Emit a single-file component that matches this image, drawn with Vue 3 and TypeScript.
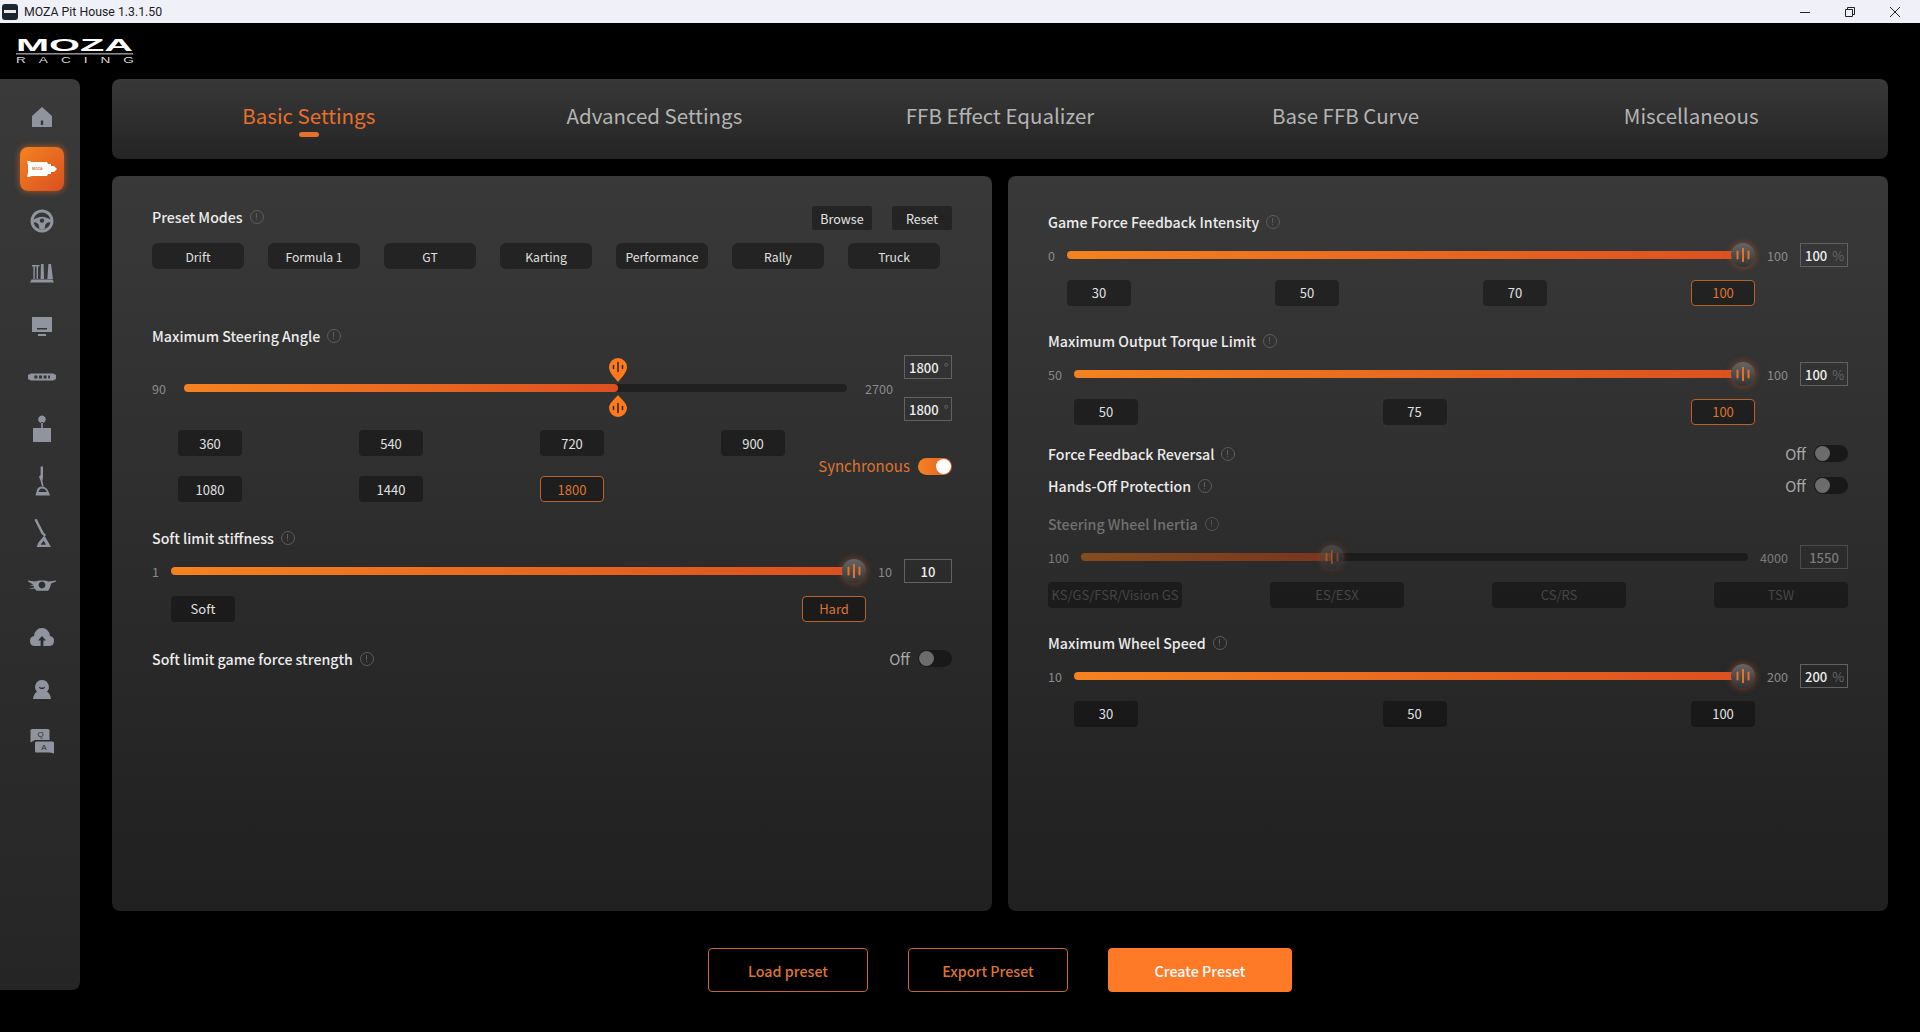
<script setup lang="ts">
interface NavItem {
  d: string
  active?: boolean
  texts?: { x: number; y: number; size: number; value: string }[]
}

interface Field {
  kind: 'slider' | 'toggle'
  label: string
  min?: number
  max?: number
  value?: number
  unit?: string
  presets?: string[]
  activePreset?: string
  disabled?: boolean
}

const navItems: NavItem[] = [
  { d: 'M18 8 L28 17 V28 H8 V17 Z M16.8 21.5 V26 H19.2 V21.5 Z' },
  {
    active: true,
    d: 'M3 10 H6 L7 11 H23 L24 13 H27 V15 H30 L33 18 L30 21 H27 V23 H24 L23 25 H7 L6 26 H3 L4 22 V14 Z',
    texts: [{ x: 8, y: 19.2, size: 3.6, value: 'MOZA' }],
  },
  {
    d: 'M18 6.5 A11.5 11.5 0 1 1 17.99 6.5 Z M18 9.5 A8.5 8.5 0 1 0 18.01 9.5 Z M9.6 16.5 C12 15.5 15 13.8 18 13.8 C21 13.8 24 15.5 26.4 16.5 L26.4 19 C24 19 22.4 20 21.4 21.8 L20.4 26.6 H15.6 L14.6 21.8 C13.6 20 12 19 9.6 19 Z M18 15.4 A2.2 2.2 0 1 0 18.01 15.4 Z',
  },
  {
    d: 'M8 10 H15.5 V11.6 H14 V24 H12.6 V11.6 H10.8 V24 H9.4 V11.6 H8 Z M17 9 H19.6 L20 24 H16.6 Z M24.4 9 H27 L29 24 H23.4 Z M7.5 24.6 H28.5 L30 27.5 H6 Z',
  },
  {
    d: 'M8 10 H28 V25 H8 Z M13 21 V22.6 H23 V21 Z M14 27 H22 V29 H14 Z',
  },
  {
    d: 'M7 14.4 H29 L32 16 V20 L29 21.6 H7 L4 20 V16 Z M10.4 16.4 V19.6 H13.4 V16.4 Z M15 16.4 V19.6 H18 V16.4 Z M19.6 16.4 V19.6 H22.6 V16.4 Z M24.2 16.4 V19.6 H26 V16.4 Z',
  },
  {
    d: 'M18 4.5 A3.8 3.8 0 1 1 17.99 4.5 Z M17.2 11 H18.8 V17 H27 V31 H9 V17 H17.2 Z',
  },
  {
    d: 'M16.6 3.5 H19 V14 L18.4 18 L19.6 23 H18 L16.6 18 L15 13.5 L16.6 12 Z M11.5 32.5 L13 27 C13.6 24.6 15.6 23.4 18 23.4 C21.6 23.4 24 26 26 32.5 Z M14.5 29 H23 C22 26.6 20.4 25.4 18 25.4 C16 25.4 15 27 14.5 29 Z',
  },
  {
    d: 'M10.4 4.8 L12.6 3.8 L19.6 17.4 L22 20 L20.6 21.4 L17.6 19 Z M12.6 32 L14.4 27.4 L19.4 21.6 L21 21.6 L27 32 Z M16.6 29.8 H22 L19.6 25.6 Z',
  },
  {
    d: 'M4 13.4 L11 14.6 C14 13 22 13 25 14.6 L32 13.4 V14.6 L27 16.4 C26.6 19 25.8 21.6 24 23.8 H12.4 L11 21.8 H4.4 L10 20.4 L9.6 18.8 H5.4 L9.2 17.4 L4 14.6 Z M18 14.6 A3.4 3.4 0 1 0 18.01 14.6 Z',
  },
  {
    d: 'M11 27 A5 5 0 0 1 10 17.1 A8 8 0 0 1 26 17.1 A5 5 0 0 1 25 27 H19.4 V21.6 H22 L18 17 L14 21.6 H16.6 V27 Z',
  },
  {
    d: 'M18 9 A7 7 0 0 1 23 20.8 C25 21.8 26.5 24.3 27 28 H9 C9.5 24.3 11 21.8 13 20.8 A7 7 0 0 1 18 9 Z M15 15.4 C16 17 20 17 21 15.4 V16.6 C20 18.6 16 18.6 15 16.6 Z',
  },
  {
    d: 'M8 6 H24 A1.5 1.5 0 0 1 25.5 7.5 V17 H11 L6.5 19.5 V7.5 A1.5 1.5 0 0 1 8 6 Z M12.5 18.5 H28.5 A1.5 1.5 0 0 1 30 20 V30.5 L26 29.5 H12.5 A1.5 1.5 0 0 1 11 28 V20 A1.5 1.5 0 0 1 12.5 18.5 Z',
    texts: [
      { x: 13.4, y: 14.4, size: 8, value: 'Q' },
      { x: 17.2, y: 27, size: 8, value: 'A' },
    ],
  },
]

const tabs = ['Basic Settings', 'Advanced Settings', 'FFB Effect Equalizer', 'Base FFB Curve', 'Miscellaneous']
const presetModes = ['Drift', 'Formula 1', 'GT', 'Karting', 'Performance', 'Rally', 'Truck']
const angleRows = ['360', '540', '720', '900', '1080', '1440', '1800']

const rightFields: Field[] = [
  {
    kind: 'slider',
    label: 'Game Force Feedback Intensity',
    min: 0,
    max: 100,
    value: 100,
    unit: '%',
    presets: ['30', '50', '70', '100'],
    activePreset: '100',
  },
  {
    kind: 'slider',
    label: 'Maximum Output Torque Limit',
    min: 50,
    max: 100,
    value: 100,
    unit: '%',
    presets: ['50', '75', '100'],
    activePreset: '100',
  },
  { kind: 'toggle', label: 'Force Feedback Reversal' },
  { kind: 'toggle', label: 'Hands-Off Protection' },
  {
    kind: 'slider',
    label: 'Steering Wheel Inertia',
    min: 100,
    max: 4000,
    value: 1550,
    presets: ['KS/GS/FSR/Vision GS', 'ES/ESX', 'CS/RS', 'TSW'],
    disabled: true,
  },
  {
    kind: 'slider',
    label: 'Maximum Wheel Speed',
    min: 10,
    max: 200,
    value: 200,
    unit: '%',
    presets: ['30', '50', '100'],
  },
]

const ratio = (value = 0, min = 0, max = 100): number => (value - min) / (max - min)
</script>

<template>
  <div class="app">
    <div class="titlebar">
      <div class="title-left">
        <span class="app-icon"><i></i></span>
        <span>MOZA Pit House 1.3.1.50</span>
      </div>
      <div class="window-controls">
        <svg width="10" height="10" viewBox="0 0 10 10"><path d="M0 5.5H10" stroke="#222" fill="none" /></svg>
        <svg width="10" height="10" viewBox="0 0 10 10">
          <path d="M.5 2.5H7.5V9.5H.5Z M2.5 2.5V.5H9.5V7.5H7.5" stroke="#222" fill="none" />
        </svg>
        <svg width="10" height="10" viewBox="0 0 10 10"><path d="M0 0L10 10M10 0L0 10" stroke="#222" fill="none" /></svg>
      </div>
    </div>

    <header class="brand">
      <svg width="118" height="32" viewBox="0 0 118 32">
        <text x="0" y="17" textLength="117" lengthAdjust="spacingAndGlyphs" class="logo-main">MOZA</text>
        <rect x="0" y="19" width="117" height="1.6" fill="#8a8a8a" />
        <text transform="scale(1.6 1)" x="0" y="29" textLength="73.7" class="logo-sub">RACING</text>
      </svg>
    </header>

    <div class="main">
      <nav class="sidebar">
        <div v-for="(item, i) in navItems" :key="i" class="nav-item" :class="{ active: item.active }">
          <svg width="36" height="36" viewBox="0 0 36 36">
            <path :d="item.d" fill-rule="evenodd" class="nav-shape" />
            <text v-for="t in item.texts" :key="t.value" :x="t.x" :y="t.y" :font-size="t.size" class="nav-text">{{ t.value }}</text>
          </svg>
        </div>
      </nav>

      <div class="content">
        <div class="tabs">
          <div v-for="(tab, i) in tabs" :key="tab" class="tab" :class="{ active: i === 0 }">
            <span>{{ tab }}</span>
          </div>
        </div>

        <div class="panels">
          <section class="panel panel-left">
            <div class="preset-head">
              <div class="field-label">Preset Modes<i class="info"></i></div>
              <div class="preset-actions">
                <button class="small-btn">Browse</button>
                <button class="small-btn">Reset</button>
              </div>
            </div>
            <div class="preset-row">
              <button v-for="mode in presetModes" :key="mode" class="chip mode">{{ mode }}</button>
            </div>

            <div class="field-label steer-label">Maximum Steering Angle<i class="info"></i></div>
            <div class="steer-row">
              <span class="limit">90</span>
              <div class="track" :style="{ '--p': ratio(1800, 90, 2700) }">
                <div class="fill fill-plain"></div>
                <svg class="pin pin-top" width="18" height="24" viewBox="0 0 18 24">
                  <path d="M9 24C6 20 0 15 0 9A9 9 0 0 1 18 9C18 15 12 20 9 24Z" fill="#ff7a1c" />
                  <path d="M4.5 7.5V10.5M9 4.5V13.5M13.5 7.5V10.5" stroke="#3a2a20" stroke-width="1.6" stroke-linecap="round" />
                </svg>
                <svg class="pin pin-bottom" width="18" height="22" viewBox="0 0 18 22">
                  <path d="M9 0C12 4 18 8 18 13A9 9 0 0 1 0 13C0 8 6 4 9 0Z" fill="#ff7a1c" />
                  <path d="M4.5 11.5V14.5M9 8.5V17.5M13.5 11.5V14.5" stroke="#3a2a20" stroke-width="1.6" stroke-linecap="round" />
                </svg>
              </div>
              <span class="limit">2700</span>
              <div class="steer-values">
                <div class="value"><b>1800</b><small>°</small></div>
                <div class="value"><b>1800</b><small>°</small></div>
              </div>
            </div>
            <div class="angle-block">
              <div class="angle-grid">
                <button v-for="a in angleRows" :key="a" class="chip" :class="{ selected: a === '1800' }">{{ a }}</button>
              </div>
              <div class="sync">
                <span>Synchronous</span>
                <span class="switch on"></span>
              </div>
            </div>

            <div class="field soft-field">
              <div class="field-label">Soft limit stiffness<i class="info"></i></div>
              <span class="limit">1</span>
              <div class="track" :style="{ '--p': 1 }">
                <div class="fill"></div>
                <div class="knob">
                  <svg width="16" height="14" viewBox="0 0 16 14">
                    <path d="M2.5 3.5V10.5M8 .5V13.5M13.5 3.5V10.5" stroke="#e8702a" stroke-width="2" stroke-linecap="round" />
                  </svg>
                </div>
              </div>
              <span class="limit">10</span>
              <div class="value center"><b>10</b></div>
              <div class="chips">
                <button class="chip">Soft</button>
                <button class="chip selected">Hard</button>
              </div>
            </div>

            <div class="toggle-row soft-force">
              <div class="field-label">Soft limit game force strength<i class="info"></i></div>
              <div class="off-group">
                <span>Off</span>
                <span class="switch"></span>
              </div>
            </div>
          </section>

          <section class="panel panel-right">
            <template v-for="field in rightFields" :key="field.label">
              <div v-if="field.kind === 'slider'" class="field slider-field" :class="{ disabled: field.disabled }">
                <div class="field-label">{{ field.label }}<i class="info"></i></div>
                <span class="limit">{{ field.min }}</span>
                <div class="track" :style="{ '--p': ratio(field.value, field.min, field.max) }">
                  <div class="fill"></div>
                  <div class="knob">
                    <svg width="16" height="14" viewBox="0 0 16 14">
                      <path d="M2.5 3.5V10.5M8 .5V13.5M13.5 3.5V10.5" stroke="#e8702a" stroke-width="2" stroke-linecap="round" />
                    </svg>
                  </div>
                </div>
                <span class="limit">{{ field.max }}</span>
                <div class="value" :class="{ center: !field.unit }">
                  <b>{{ field.value }}</b><small v-if="field.unit">{{ field.unit }}</small>
                </div>
                <div class="chips">
                  <button
                    v-for="p in field.presets"
                    :key="p"
                    class="chip"
                    :class="{ selected: p === field.activePreset, wide: field.disabled }"
                  >
                    {{ p }}
                  </button>
                </div>
              </div>
              <div v-else class="toggle-row toggle-field">
                <div class="field-label">{{ field.label }}<i class="info"></i></div>
                <div class="off-group">
                  <span>Off</span>
                  <span class="switch"></span>
                </div>
              </div>
            </template>
          </section>
        </div>

        <div class="actions">
          <button class="action">Load preset</button>
          <button class="action">Export Preset</button>
          <button class="action primary">Create Preset</button>
        </div>
      </div>
    </div>
  </div>
</template>

<style>
html,
body {
  margin: 0;
  background: #000;
}
</style>

<style scoped>
.app {
  width: 1920px;
  height: 1032px;
  overflow: hidden;
  background: #000;
  font-family: "Noto Sans CJK SC", "Noto Sans", sans-serif;
  color: #e8e8e8;
}

button {
  font-family: inherit;
  cursor: pointer;
  padding: 0;
}

/* title bar */
.titlebar {
  height: 23px;
  background: #f0f0f8;
  display: flex;
  align-items: center;
  justify-content: space-between;
  padding: 0 20px 0 2px;
  color: #1c1c1c;
  font-family: Roboto, sans-serif;
  font-size: 12.3px;
}

.title-left {
  display: flex;
  align-items: center;
  gap: 6px;
}

.app-icon {
  width: 16px;
  height: 16px;
  border-radius: 3px;
  background: #1a2531;
  display: flex;
  align-items: center;
  justify-content: center;
}

.app-icon i {
  width: 12px;
  height: 3px;
  background: #e8e8e8;
}

.window-controls {
  display: flex;
  gap: 35px;
}

/* logo */
.brand {
  height: 56px;
  padding: 11px 0 0 16px;
  box-sizing: border-box;
}

.logo-main {
  font-family: "Liberation Sans", sans-serif;
  font-weight: 700;
  font-size: 17px;
  fill: #fff;
}

.logo-sub {
  font-family: "Liberation Sans", sans-serif;
  font-size: 8.5px;
  fill: #d8d8d8;
}

.main {
  display: flex;
  align-items: flex-start;
}

/* sidebar */
.sidebar {
  width: 80px;
  height: 911px;
  box-sizing: border-box;
  padding: 16px 0 0 4px;
  border-radius: 0 8px 8px 0;
  background: linear-gradient(180deg, #3a3a3a 0%, #252525 100%);
  display: flex;
  flex-direction: column;
  align-items: center;
  gap: 8px;
}

.nav-item {
  width: 44px;
  height: 44px;
  border-radius: 8px;
  display: flex;
  align-items: center;
  justify-content: center;
}

.nav-item.active {
  background: linear-gradient(135deg, #f58220, #d9501f);
  box-shadow: 0 0 7px rgba(240, 110, 30, 0.65);
}

.nav-shape {
  fill: #8f949e;
}

.nav-item.active .nav-shape {
  fill: #fff;
}

.nav-text {
  font-family: "Liberation Sans", sans-serif;
  fill: #2e2e2e;
}

.nav-item.active .nav-text {
  font-weight: 700;
  fill: #e8702a;
}

/* tabs */
.content {
  width: 1776px;
  margin-left: 32px;
}

.tabs {
  height: 80px;
  box-sizing: border-box;
  padding: 0 24px;
  border-radius: 8px;
  background: linear-gradient(180deg, #383838, #242424);
  display: grid;
  grid-template-columns: repeat(5, 1fr);
}

.tab {
  display: flex;
  justify-content: center;
  padding-top: 20px;
  font-size: 20.5px;
  line-height: 32px;
  color: #b4b4b4;
}

.tab span {
  position: relative;
  height: 32px;
}

.tab.active {
  color: #e8702a;
}

.tab.active span::after {
  content: "";
  position: absolute;
  left: 50%;
  bottom: -6px;
  width: 20px;
  height: 5px;
  margin-left: -10px;
  border-radius: 3px;
  background: #e8702a;
}

/* panels */
.panels {
  margin-top: 17px;
  display: flex;
  gap: 16px;
}

.panel {
  flex: 1;
  height: 735px;
  box-sizing: border-box;
  padding: 30px 40px 0;
  border-radius: 8px;
  background: linear-gradient(180deg, #393939 0%, #202020 100%);
}

.panel-right {
  padding-top: 37px;
}

.field-label {
  display: flex;
  align-items: center;
  box-sizing: border-box;
  height: 20px;
  padding-bottom: 2px;
  font-size: 14.2px;
  line-height: 18px;
  font-weight: 500;
  color: #ececec;
  white-space: nowrap;
}

.info {
  position: relative;
  width: 12px;
  height: 12px;
  margin-left: 7px;
  border: 1px solid #5c5c5c;
  border-radius: 50%;
}

.info::after {
  content: "";
  position: absolute;
  left: 5px;
  top: 2px;
  width: 1px;
  height: 5px;
  background: #5c5c5c;
}

.info::before {
  content: "";
  position: absolute;
  left: 5px;
  top: 8px;
  width: 1px;
  height: 1px;
  background: #5c5c5c;
}

.preset-head {
  display: flex;
  align-items: center;
  justify-content: space-between;
  height: 24px;
}

.preset-actions {
  display: flex;
  gap: 20px;
}

.small-btn {
  width: 60px;
  height: 24px;
  border: none;
  border-radius: 2px;
  background: rgba(0, 0, 0, 0.35);
  color: #e4e4e4;
  font-size: 12.5px;
}

.preset-row {
  margin-top: 13px;
  display: flex;
  gap: 24px;
}

.chip {
  width: 64px;
  height: 26px;
  box-sizing: border-box;
  border: 1px solid transparent;
  border-radius: 4px;
  background: rgba(0, 0, 0, 0.35);
  color: #e0e0e0;
  font-size: 13px;
  line-height: 22px;
  white-space: nowrap;
}

.chip.mode {
  width: 92px;
  border-radius: 6px;
  font-size: 12.2px;
}

.chip.mode,
.angle-grid .chip {
  padding-top: 2px;
}

.chip.wide {
  width: 134px;
}

.chip.selected {
  border-color: #b8622b;
  color: #de7430;
}

.steer-label {
  margin-top: 58px;
}

.steer-row {
  margin-top: 8px;
  display: flex;
  align-items: center;
  gap: 18px;
}

.steer-values {
  margin-left: -7px;
  display: flex;
  flex-direction: column;
  gap: 18px;
}

.limit {
  padding-top: 2px;
  font-size: 12.6px;
  line-height: 18px;
  color: #8a8a8a;
}

.track {
  position: relative;
  flex: 1;
  height: 8px;
  border-radius: 4px;
  background: rgba(0, 0, 0, 0.35);
}

.fill {
  height: 100%;
  width: calc(12px + (100% - 24px) * var(--p));
  border-radius: 4px 0 0 4px;
  background: linear-gradient(90deg, #f58220, #dc5020);
}

.fill-plain {
  width: calc(100% * var(--p));
  border-radius: 4px;
}

.pin {
  position: absolute;
  left: calc(100% * var(--p) - 9px);
}

.pin-top {
  top: -26px;
}

.pin-bottom {
  top: 11px;
}

.knob {
  position: absolute;
  top: -8px;
  left: calc((100% - 24px) * var(--p));
  width: 24px;
  height: 24px;
  border-radius: 50%;
  background: linear-gradient(180deg, #666, #333);
  box-shadow: 0 0 7px rgba(225, 90, 30, 0.55);
  display: flex;
  align-items: center;
  justify-content: center;
}

.value {
  width: 48px;
  height: 24px;
  box-sizing: border-box;
  padding-left: 4px;
  border: 1px solid #626262;
  display: flex;
  align-items: center;
  gap: 5px;
  font-size: 13px;
  color: #eee;
}

.value b {
  font-weight: 500;
}

.value small {
  font-size: 13px;
  color: #666;
}

.value.center {
  justify-content: center;
  padding-left: 0;
}

.angle-block {
  margin-top: 9px;
  display: flex;
  align-items: center;
  justify-content: space-between;
  padding-left: 26px;
}

.angle-grid {
  display: grid;
  grid-template-columns: repeat(4, 64px);
  column-gap: 117px;
  row-gap: 20px;
}

.sync {
  display: flex;
  align-items: center;
  gap: 8px;
  font-size: 15px;
  line-height: 20px;
  color: #de7430;
}

.switch {
  position: relative;
  display: block;
  width: 34px;
  height: 17px;
  border-radius: 9px;
  background: #191919;
}

.switch::after {
  content: "";
  position: absolute;
  left: 1px;
  top: 1px;
  width: 15px;
  height: 15px;
  border-radius: 50%;
  background: #6c6c6c;
}

.switch.on {
  background: linear-gradient(90deg, #f58220, #e0602a);
}

.switch.on::after {
  left: auto;
  right: 1px;
  background: #fff;
}

/* label, then slider row, then preset chips */
.field {
  display: grid;
  grid-template-columns: auto 1fr auto auto;
  column-gap: 12px;
  align-items: center;
}

.field .field-label {
  grid-column: 1 / -1;
  margin-bottom: 10px;
}

.field .limit,
.field .track,
.field .value {
  grid-row: 2;
}

.field .track {
  flex: none;
}

.chips {
  grid-column: 2;
  grid-row: 3;
  margin-top: 13px;
  display: flex;
  justify-content: space-between;
}

.disabled .chips {
  grid-column: 1 / -1;
}

.soft-field {
  margin-top: 27px;
}

.slider-field + .slider-field {
  margin-top: 26px;
}

.slider-field + .toggle-field {
  margin-top: 20px;
}

.toggle-field + .toggle-field {
  margin-top: 12px;
}

.toggle-field + .slider-field {
  margin-top: 18px;
}

.toggle-row {
  display: flex;
  align-items: flex-start;
  justify-content: space-between;
}

.soft-force {
  margin-top: 28px;
}

.off-group {
  display: flex;
  align-items: flex-start;
  gap: 8px;
  font-size: 15px;
  line-height: 18px;
  color: #a8a8a8;
}

.disabled .field-label {
  color: #707070;
}

.disabled .info {
  opacity: 0.8;
}

.disabled .track .fill,
.disabled .knob {
  opacity: 0.48;
}

.disabled .limit,
.disabled .value b {
  color: #7a7a7a;
}

.disabled .value {
  border-color: #4c4c4c;
}

.disabled .chip {
  color: #464646;
  font-size: 13px;
}

/* bottom buttons */
.actions {
  margin-top: 37px;
  display: flex;
  justify-content: center;
  gap: 40px;
}

.action {
  width: 160px;
  height: 44px;
  box-sizing: border-box;
  border: 1px solid #c4682c;
  border-radius: 4px;
  background: transparent;
  color: #de7430;
  font-size: 14.3px;
  font-weight: 500;
}

.action.primary {
  width: 184px;
  border-color: #ff7a26;
  background: #ff7a26;
  color: #fff;
}
</style>
